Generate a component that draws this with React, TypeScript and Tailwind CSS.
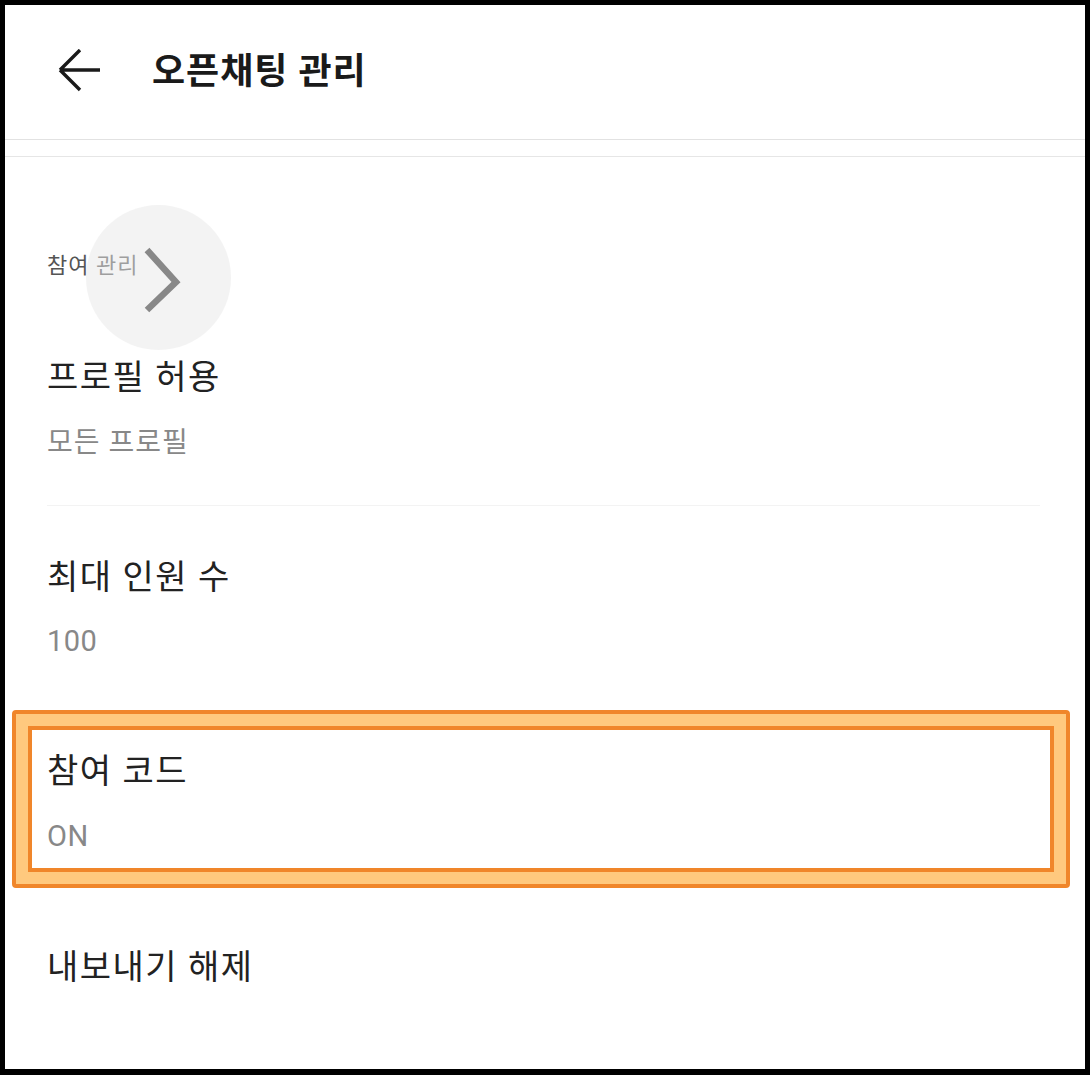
import React from "react";

const font = { fontFamily: "Roboto, 'Noto Sans CJK KR', sans-serif" };

export default function App() {
  return (
    <div className="w-[1090px] h-[1075px] bg-black pt-[5px] pl-[5px] pr-[5px] pb-[6px]" style={font}>
      <div className="relative w-full h-full bg-white overflow-hidden flex flex-col">
        {/* Header */}
        <div className="h-[134px] shrink-0 flex items-center">
          <svg className="ml-[51px] w-[46px] h-[46px]" viewBox="0 0 46 46" fill="none">
            <path d="M44 21H4M4 21L24 1M4 21L24 41" stroke="#1a1a1a" strokeWidth="3.4" strokeLinecap="butt" strokeLinejoin="miter" />
          </svg>
          <div className="ml-[50px] text-[36px] font-bold text-[#1a1a1a] tracking-[1px] leading-none">오픈채팅 관리</div>
        </div>
        <div className="h-px bg-[#e2e2e2] shrink-0" />
        <div className="h-[16px] shrink-0" />
        <div className="h-px bg-[#e6e6e6] shrink-0" />

        <div className="pl-[42px]">
          <div className="mt-[94px] h-[30px] leading-[30px] text-[22px] tracking-[1px] text-[#555]">참여 관리</div>
          <div className="mt-[74px] h-[44px] leading-[44px] text-[34px] tracking-[1.5px] text-[#222]">프로필 허용</div>
          <div className="mt-[26px] h-[36px] leading-[36px] text-[28px] tracking-[1px] text-[#888]">모든 프로필</div>
        </div>
        <div className="mt-[44px] ml-[42px] mr-[45px] h-px bg-[#f3f3f3]" />
        <div className="pl-[42px]">
          <div className="mt-[49px] h-[44px] leading-[44px] text-[34px] tracking-[1.5px] text-[#222]">최대 인원 수</div>
          <div className="mt-[24px] h-[36px] leading-[36px] text-[29px] tracking-[0.5px] text-[#888]">100</div>
        </div>

        {/* Highlighted item */}
        <div className="mt-[51px] ml-[7px] w-[1058px] border-[4px] border-[#f0862a] bg-[#ffc97e] rounded-[4px] p-[12px]">
          <div className="border-[4px] border-[#f0862a] bg-white pl-[15px] pt-[19px] pb-[14px]">
            <div className="h-[44px] leading-[44px] text-[34px] tracking-[1.5px] text-[#222]">참여 코드</div>
            <div className="mt-[25px] h-[36px] leading-[36px] text-[29px] tracking-[0.5px] text-[#888]">ON</div>
          </div>
        </div>

        <div className="pl-[42px]">
          <div className="mt-[57px] h-[44px] leading-[44px] text-[34px] tracking-[1.5px] text-[#222]">내보내기 해제</div>
        </div>

        {/* Overlay circle with chevron */}
        <div className="absolute left-[81px] top-[200px] w-[145px] h-[145px] rounded-full bg-[#e7e7e7]/50" />
        <svg className="absolute left-[134px] top-[240px] w-[44px] h-[70px]" viewBox="0 0 44 70" fill="none">
          <path d="M8 5L37 37L8 65" stroke="#888" strokeWidth="6.5" strokeLinejoin="miter" />
        </svg>
      </div>
    </div>
  );
}
